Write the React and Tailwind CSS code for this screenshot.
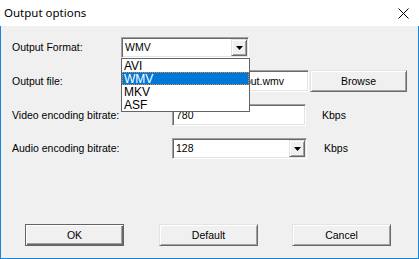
import React from "react";

const sunken =
  "border border-t-[#a0a0a0] border-l-[#a0a0a0] border-b-white border-r-white shadow-[inset_1px_1px_0_#696969,inset_-1px_-1px_0_#e3e3e3]";
const raised =
  "border border-t-[#e3e3e3] border-l-[#e3e3e3] border-b-[#696969] border-r-[#696969] shadow-[inset_1px_1px_0_#ffffff,inset_-1px_-1px_0_#a0a0a0]";

function Arrow() {
  return (
    <div className={`w-[16px] h-full bg-[#f0f0f0] flex items-center justify-center ${raised}`}>
      <svg width="7" height="4" viewBox="0 0 7 4">
        <polygon points="0,0 7,0 3.5,4" fill="#000" />
      </svg>
    </div>
  );
}

function Button({ label, def }) {
  return (
    <div
      className={`w-[99px] h-[22px] bg-[#f0f0f0] flex items-center justify-center ${
        def
          ? "border border-[#646464] shadow-[inset_1px_1px_0_#ffffff,inset_-1px_-1px_0_#696969,inset_-2px_-2px_0_#a0a0a0]"
          : raised
      }`}
    >
      {label}
    </div>
  );
}

export default function App() {
  return (
    <div className="w-[419px] h-[259px] flex flex-col bg-white text-black font-['Liberation_Sans',Arial,sans-serif] text-[10.5px] leading-none">
      <div className="h-[26px] flex items-center justify-between pl-[4px] pr-[10px]">
        <span className="font-['Noto_Sans',sans-serif] text-[11.5px]">Output options</span>
        <svg width="11" height="11" viewBox="0 0 11 11">
          <path d="M0.5 0.5 L10.5 10.5 M10.5 0.5 L0.5 10.5" stroke="#000" strokeWidth="1" />
        </svg>
      </div>
      <div className="flex-1 relative bg-[#f0f0f0] border-x border-b border-[#1883d7] flex flex-col pl-[11px] pt-[11px]">
        {/* Row 1 */}
        <div className="flex items-center h-[21px]">
          <span className="w-[109px]">Output Format:</span>
          <div className="w-[128px] h-[21px] relative bg-white flex p-[2px]">
            <div className={`absolute inset-0 ${sunken}`} />
            <div className="relative flex-1 flex items-center pl-[2px]">WMV</div>
            <div className="relative h-[17px]">
              <Arrow />
            </div>
          </div>
        </div>
        {/* Row 2 */}
        <div className="flex items-center h-[22px] mt-[12px]">
          <span className="w-[109px]">Output file:</span>
          <div className={`w-[188px] h-[22px] bg-white flex items-center justify-end pr-[24px] overflow-hidden ${sunken}`}>
            <span className="whitespace-nowrap">output.wmv</span>
          </div>
          <div className="ml-[1px]">
            <div className={`w-[97px] h-[22px] bg-[#f0f0f0] flex items-center justify-center ${raised}`}>Browse</div>
          </div>
        </div>
        {/* Row 3 */}
        <div className="flex items-center h-[22px] mt-[12px]">
          <span className="w-[160px]">Video encoding bitrate:</span>
          <div className={`w-[134px] h-[22px] bg-white flex items-center pl-[3px] ${sunken}`}>780</div>
          <span className="ml-[16px]">Kbps</span>
        </div>
        {/* Row 4 */}
        <div className="flex items-center h-[21px] mt-[12px]">
          <span className="w-[160px]">Audio encoding bitrate:</span>
          <div className="w-[135px] h-[21px] relative bg-white flex p-[2px]">
            <div className={`absolute inset-0 ${sunken}`} />
            <div className="relative flex-1 flex items-center pl-[2px]">128</div>
            <div className="relative h-[17px]">
              <Arrow />
            </div>
          </div>
          <span className="ml-[17px]">Kbps</span>
        </div>
        {/* Buttons */}
        <div className="flex items-center mt-[65px] pl-[13px]">
          <Button label="OK" def />
          <div className="ml-[35px]">
            <Button label="Default" />
          </div>
          <div className="ml-[34px]">
            <Button label="Cancel" />
          </div>
        </div>

        {/* Dropdown list */}
        <div className="absolute left-[120px] top-[32px] w-[129px] h-[54px] bg-white border border-[#646464] flex flex-col text-[12px]">
          <div className="h-[13px] flex items-center pl-[2px]">AVI</div>
          <div className="h-[13px] flex items-center pl-[1px] bg-[#0078d7] text-white border border-dotted border-[#f7862a]">WMV</div>
          <div className="h-[13px] flex items-center pl-[2px]">MKV</div>
          <div className="h-[13px] flex items-center pl-[2px]">ASF</div>
        </div>
      </div>
    </div>
  );
}
